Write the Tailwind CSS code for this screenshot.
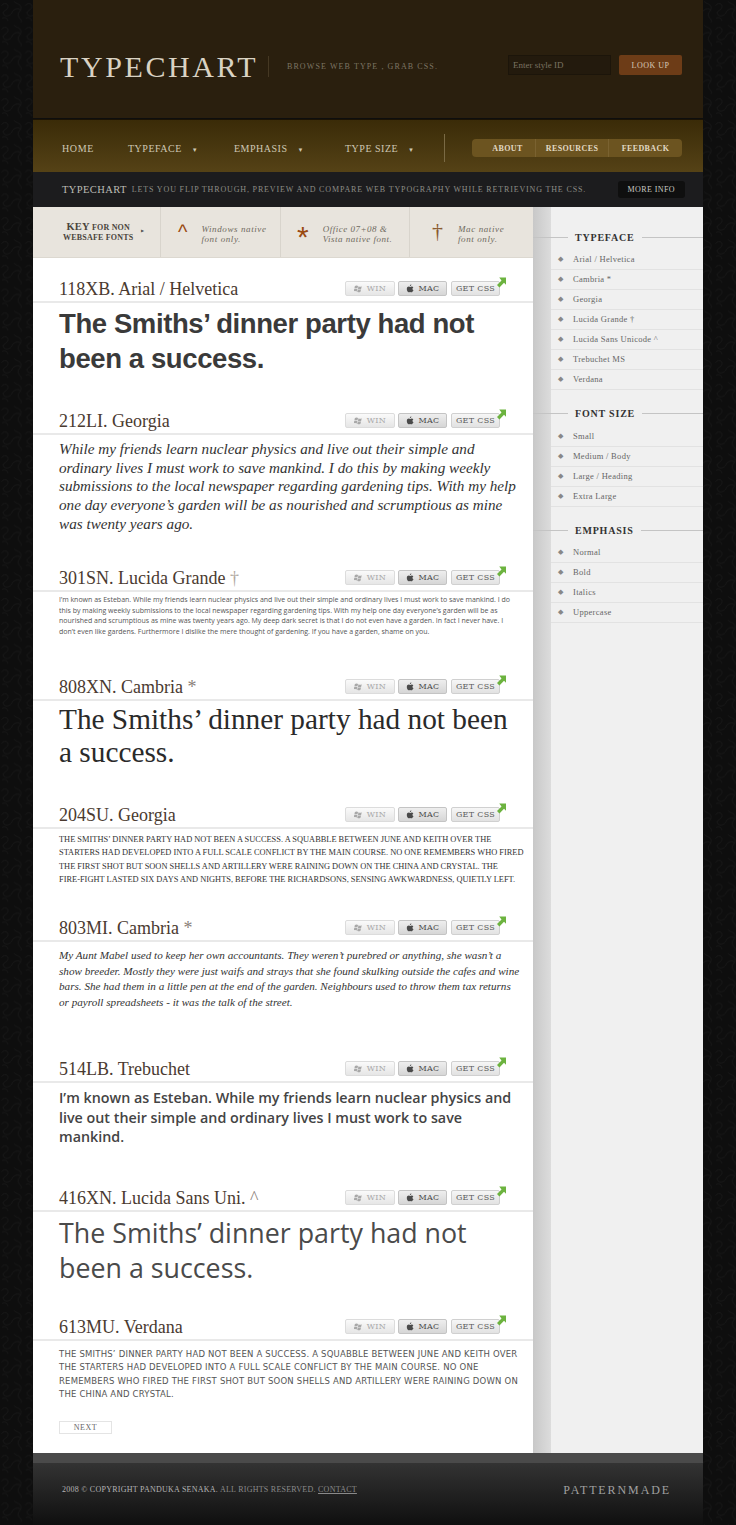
<!DOCTYPE html>
<html lang="en">
<head>
<meta charset="UTF-8">
<title>Typechart</title>
<script src="https://cdn.jsdelivr.net/npm/@tailwindcss/browser@4"></script>
</head>
<body class="relative bg-[#0e0e0e] font-['Liberation_Serif',serif]">
<svg class="hidden">
  <symbol id="win" viewBox="0 0 10 10"><path d="M1 2.200c1.200-.8 2.400-.8 3.500 0L3.800 5C2.700 4.300 1.600 4.300.4 5zM5 2.400c1.200.8 2.400.8 3.600 0L8 5.200c-1.200.8-2.400.8-3.600 0zM.3 5.600c1.200-.8 2.300-.8 3.400 0L3 8.400c-1.100-.8-2.200-.8-3.400 0zM4.300 5.800c1.200.8 2.400.8 3.600 0l-.7 2.800c-1.200.8-2.400.8-3.600 0z" fill="currentColor"/></symbol>
  <symbol id="apple" viewBox="0 0 10 10"><path d="M7.800 7.400c-.4.900-1 1.900-1.800 1.900-.6 0-.8-.4-1.500-.4s-.9.400-1.500.4C2 9.300.9 7.100.9 5.500c0-1.700 1.100-2.600 2.200-2.600.7 0 1.200.4 1.600.4s.9-.5 1.700-.5c.7 0 1.400.4 1.800 1-.6.400-1 .9-1 1.600 0 .9.500 1.500 1.300 1.800zM6 .6c0 .9-.8 1.800-1.700 1.700C4.200 1.400 5.100.6 6 .6z" fill="currentColor"/></symbol>
  <symbol id="arrow" viewBox="0 0 10 11"><path d="M2.500 0H10v8L7.800 5.800 2.700 11 0 8.300 5 3.200z" fill="#6cb33f"/></symbol>
</svg>

<!-- Leather texture behind the page -->
<svg class="absolute inset-0 w-full h-full -z-10">
  <defs>
    <pattern id="leather" width="34" height="34" patternUnits="userSpaceOnUse" patternTransform="scale(.7)">
      <path d="M2 8c5-6 11-2 9 3s-8 4-6 9 10 3 12-2 9-8 13-3M20 2c3 4 9 3 10 8s-5 7-4 12 6 6 4 10M3 26c4-2 8 0 8 4" fill="none" stroke="#191919" stroke-width="1"/>
    </pattern>
  </defs>
  <rect width="100%" height="100%" fill="url(#leather)"/>
</svg>

<div class="w-[670px] ml-[33px]">
  <!-- Top header -->
  <header class="h-[118px] bg-[#2a1f0e] flex items-start pt-[56px] pl-[27px]">
    <div class="text-[30px] leading-[21px] tracking-[2.6px] text-[#d9d2c3] w-[209px] border-r border-[#453823]">TYPECHART</div>
    <div class="ml-[18px] mt-[6px] text-[8px] leading-[10px] tracking-[1.1px] text-[#7d7564] w-[221px]">BROWSE WEB TYPE , GRAB CSS.</div>
    <div class="w-[103px] h-[20px] -mt-[1px] bg-[#231a0d] border border-[#1c150a] pl-[4px] text-[9px] leading-[19px] text-[#7b7362]">Enter style ID</div>
    <div class="w-[63px] h-[20px] -mt-[1px] ml-[8px] rounded-[2px] bg-[#6d3c17] text-center text-[8px] leading-[22px] tracking-[.5px] text-[#d8cbb8]">LOOK UP</div>
  </header>

  <!-- Nav -->
  <nav class="mt-[1px] h-[53px] pt-[4px] bg-[linear-gradient(#3a2b08,#554216)] border-t border-[#1a1204] flex items-center pl-[29px] text-[#cfc8b4]">
    <a class="text-[10px] tracking-[.6px] w-[66px]">HOME</a>
    <a class="text-[10px] tracking-[.5px] w-[106px]">TYPEFACE <span class="ml-[7px] text-[6px]">▼</span></a>
    <a class="text-[10px] tracking-[.5px] w-[111px]">EMPHASIS <span class="ml-[7px] text-[6px]">▼</span></a>
    <a class="text-[10px] tracking-[.5px] w-[99px]">TYPE SIZE <span class="ml-[7px] text-[6px]">▼</span></a>
    <div class="h-[28px] w-px bg-[#7a6a44]"></div>
    <div class="ml-[27px] w-[210px] h-[18px] rounded-[4px] bg-[#6c5420] flex text-[8px] leading-[19px] tracking-[.4px] text-[#e2dac5] font-bold">
      <span class="w-[64px] text-center pl-[8px] border-r border-[#7a6230]">ABOUT</span>
      <span class="w-[73px] text-center border-r border-[#7a6230]">RESOURCES</span>
      <span class="flex-1 text-center">FEEDBACK</span>
    </div>
  </nav>

  <!-- Intro strip -->
  <div class="h-[35px] pt-[1px] bg-[#1c1c1e] flex items-center pl-[29px]">
    <span class="text-[10.500px] tracking-[.4px] text-[#bdbdb5]">TYPECHART</span>
    <span class="ml-[5px] w-[486px] text-[8px] tracking-[.85px] text-[#8d8d86]">LETS YOU FLIP THROUGH, PREVIEW AND COMPARE WEB TYPOGRAPHY WHILE RETRIEVING THE CSS.</span>
    <span class="w-[67px] h-[17px] -mt-[1px] rounded-[3px] bg-[#0f0f0f] text-center text-[8px] leading-[17px] tracking-[.4px] text-[#c9c9c2]">MORE INFO</span>
  </div>

  <div class="flex">
    <main class="w-[500px] h-[1246px] bg-white">
      <!-- Key -->
      <div class="h-[51px] bg-[#e8e4dd] border-b border-[#dcd8d0] flex text-[#6f6a60]">
        <div class="w-[128px] pl-[30px] pt-[15px] flex border-r border-[#d8d4cc]">
          <div class="text-[8px] leading-[10px] font-bold tracking-[.2px] text-[#4a453c] text-center"><span class="text-[10.500px]">KEY</span> FOR NON<br>WEBSAFE FONTS</div>
          <span class="ml-[8px] mt-[6px] text-[4px] text-[#555]">▶</span>
        </div>
        <div class="w-[120px] flex border-r border-[#d8d4cc]">
          <span class="ml-[17px] mt-[15px] text-[20px] leading-[20px] text-[#9a4a12] font-['Liberation_Sans']">^</span>
          <div class="ml-[14px] mt-[17px] text-[9px] leading-[10px] italic tracking-[.6px]">Windows native<br>font only.</div>
        </div>
        <div class="w-[129px] flex border-r border-[#d8d4cc]">
          <span class="ml-[16px] mt-[15px] text-[30px] leading-[30px] text-[#9a4a12] font-['Liberation_Sans']">*</span>
          <div class="ml-[14px] mt-[17px] text-[9px] leading-[10px] italic tracking-[.5px]">Office 07+08 &amp;<br>Vista native font.</div>
        </div>
        <div class="flex-1 flex">
          <span class="ml-[22px] mt-[13px] text-[22px] leading-[22px] text-[#8a5a30]">†</span>
          <div class="ml-[15px] mt-[17px] text-[9px] leading-[10px] italic tracking-[.6px]">Mac native<br>font only.</div>
        </div>
      </div>

      <section class="mt-[15px]">
        <div class="h-[30px] border-b-2 border-[#e9e9e9] flex justify-between pl-[26px] pr-[33px]">
          <h2 class="text-[18px] leading-[33px] text-[#4a3a30]">118XB. Arial / Helvetica</h2>
          <div class="relative flex pt-[8px] text-[8px] tracking-[.3px] font-['DejaVu_Serif']">
            <span class="w-[50px] h-[15px] rounded-[2px] border border-[#dcdcdc] bg-[linear-gradient(#fafafa,#e6e6e6)] flex items-center justify-center gap-[4px] text-[#a8a8a8]"><svg class="w-[9px] h-[9px]"><use href="#win"/></svg>WIN</span>
            <span class="w-[49px] h-[15px] ml-[3px] rounded-[2px] border border-[#c4c4c4] bg-[linear-gradient(#eeeeee,#d6d6d6)] flex items-center justify-center gap-[4px] text-[#4a4a4a]"><svg class="w-[9px] h-[9px]"><use href="#apple"/></svg>MAC</span>
            <span class="w-[49px] h-[15px] ml-[4px] rounded-[2px] border border-[#d0d0d0] bg-[linear-gradient(#f6f6f6,#e2e2e2)] flex items-center justify-center text-[#5a5a5a]">GET CSS</span>
            <svg class="absolute right-[-6px] top-[4px] w-[9px] h-[11px]"><use href="#arrow"/></svg>
          </div>
        </div>
        <p class="h-[102px] pl-[26px] pt-[3px] text-[27.500px] leading-[35px] font-bold tracking-[-.4px] text-[#3a3a3a] font-['Liberation_Sans']">The Smiths’ dinner party had not<br>been a success.</p>
      </section>

      <section>
        <div class="h-[30px] border-b-2 border-[#e9e9e9] flex justify-between pl-[26px] pr-[33px]">
          <h2 class="text-[18px] leading-[33px] text-[#4a3a30]">212LI. Georgia</h2>
          <div class="relative flex pt-[8px] text-[8px] tracking-[.3px] font-['DejaVu_Serif']">
            <span class="w-[50px] h-[15px] rounded-[2px] border border-[#dcdcdc] bg-[linear-gradient(#fafafa,#e6e6e6)] flex items-center justify-center gap-[4px] text-[#a8a8a8]"><svg class="w-[9px] h-[9px]"><use href="#win"/></svg>WIN</span>
            <span class="w-[49px] h-[15px] ml-[3px] rounded-[2px] border border-[#c4c4c4] bg-[linear-gradient(#eeeeee,#d6d6d6)] flex items-center justify-center gap-[4px] text-[#4a4a4a]"><svg class="w-[9px] h-[9px]"><use href="#apple"/></svg>MAC</span>
            <span class="w-[49px] h-[15px] ml-[4px] rounded-[2px] border border-[#d0d0d0] bg-[linear-gradient(#f6f6f6,#e2e2e2)] flex items-center justify-center text-[#5a5a5a]">GET CSS</span>
            <svg class="absolute right-[-6px] top-[4px] w-[9px] h-[11px]"><use href="#arrow"/></svg>
          </div>
        </div>
        <p class="h-[127px] pl-[26px] pt-[5px] text-[15.200px] leading-[18.700px] italic text-[#333] whitespace-nowrap">While my friends learn nuclear physics and live out their simple and<br>ordinary lives I must work to save mankind. I do this by making weekly<br>submissions to the local newspaper regarding gardening tips. With my help<br>one day everyone’s garden will be as nourished and scrumptious as mine<br>was twenty years ago.</p>
      </section>

      <section>
        <div class="h-[30px] border-b-2 border-[#e9e9e9] flex justify-between pl-[26px] pr-[33px]">
          <h2 class="text-[18px] leading-[33px] text-[#4a3a30]">301SN. Lucida Grande <span class="text-[#b0a8a0]">†</span></h2>
          <div class="relative flex pt-[8px] text-[8px] tracking-[.3px] font-['DejaVu_Serif']">
            <span class="w-[50px] h-[15px] rounded-[2px] border border-[#dcdcdc] bg-[linear-gradient(#fafafa,#e6e6e6)] flex items-center justify-center gap-[4px] text-[#a8a8a8]"><svg class="w-[9px] h-[9px]"><use href="#win"/></svg>WIN</span>
            <span class="w-[49px] h-[15px] ml-[3px] rounded-[2px] border border-[#c4c4c4] bg-[linear-gradient(#eeeeee,#d6d6d6)] flex items-center justify-center gap-[4px] text-[#4a4a4a]"><svg class="w-[9px] h-[9px]"><use href="#apple"/></svg>MAC</span>
            <span class="w-[49px] h-[15px] ml-[4px] rounded-[2px] border border-[#d0d0d0] bg-[linear-gradient(#f6f6f6,#e2e2e2)] flex items-center justify-center text-[#5a5a5a]">GET CSS</span>
            <svg class="absolute right-[-6px] top-[4px] w-[9px] h-[11px]"><use href="#arrow"/></svg>
          </div>
        </div>
        <p class="h-[79px] pl-[26px] pt-[3px] text-[7px] leading-[10.700px] text-[#555] font-['Open_Sans'] whitespace-nowrap">I’m known as Esteban. While my friends learn nuclear physics and live out their simple and ordinary lives I must work to save mankind. I do<br>this by making weekly submissions to the local newspaper regarding gardening tips. With my help one day everyone’s garden will be as<br>nourished and scrumptious as mine was twenty years ago. My deep dark secret is that I do not even have a garden. In fact I never have. I<br>don’t even like gardens. Furthermore I dislike the mere thought of gardening. If you have a garden, shame on you.</p>
      </section>

      <section>
        <div class="h-[30px] border-b-2 border-[#e9e9e9] flex justify-between pl-[26px] pr-[33px]">
          <h2 class="text-[18px] leading-[33px] text-[#4a3a30]">808XN. Cambria <span class="text-[#8a8078]">*</span></h2>
          <div class="relative flex pt-[8px] text-[8px] tracking-[.3px] font-['DejaVu_Serif']">
            <span class="w-[50px] h-[15px] rounded-[2px] border border-[#dcdcdc] bg-[linear-gradient(#fafafa,#e6e6e6)] flex items-center justify-center gap-[4px] text-[#a8a8a8]"><svg class="w-[9px] h-[9px]"><use href="#win"/></svg>WIN</span>
            <span class="w-[49px] h-[15px] ml-[3px] rounded-[2px] border border-[#c4c4c4] bg-[linear-gradient(#eeeeee,#d6d6d6)] flex items-center justify-center gap-[4px] text-[#4a4a4a]"><svg class="w-[9px] h-[9px]"><use href="#apple"/></svg>MAC</span>
            <span class="w-[49px] h-[15px] ml-[4px] rounded-[2px] border border-[#d0d0d0] bg-[linear-gradient(#f6f6f6,#e2e2e2)] flex items-center justify-center text-[#5a5a5a]">GET CSS</span>
            <svg class="absolute right-[-6px] top-[4px] w-[9px] h-[11px]"><use href="#arrow"/></svg>
          </div>
        </div>
        <p class="h-[98px] pl-[26px] pt-[2px] text-[29.300px] leading-[32.500px] text-[#2a2a2a] whitespace-nowrap">The Smiths’ dinner party had not been<br>a success.</p>
      </section>

      <section>
        <div class="h-[30px] border-b-2 border-[#e9e9e9] flex justify-between pl-[26px] pr-[33px]">
          <h2 class="text-[18px] leading-[33px] text-[#4a3a30]">204SU. Georgia</h2>
          <div class="relative flex pt-[8px] text-[8px] tracking-[.3px] font-['DejaVu_Serif']">
            <span class="w-[50px] h-[15px] rounded-[2px] border border-[#dcdcdc] bg-[linear-gradient(#fafafa,#e6e6e6)] flex items-center justify-center gap-[4px] text-[#a8a8a8]"><svg class="w-[9px] h-[9px]"><use href="#win"/></svg>WIN</span>
            <span class="w-[49px] h-[15px] ml-[3px] rounded-[2px] border border-[#c4c4c4] bg-[linear-gradient(#eeeeee,#d6d6d6)] flex items-center justify-center gap-[4px] text-[#4a4a4a]"><svg class="w-[9px] h-[9px]"><use href="#apple"/></svg>MAC</span>
            <span class="w-[49px] h-[15px] ml-[4px] rounded-[2px] border border-[#d0d0d0] bg-[linear-gradient(#f6f6f6,#e2e2e2)] flex items-center justify-center text-[#5a5a5a]">GET CSS</span>
            <svg class="absolute right-[-6px] top-[4px] w-[9px] h-[11px]"><use href="#arrow"/></svg>
          </div>
        </div>
        <p class="h-[83px] pl-[26px] pt-[4px] text-[8.400px] leading-[13.300px] text-[#333] whitespace-nowrap">THE SMITHS’ DINNER PARTY HAD NOT BEEN A SUCCESS. A SQUABBLE BETWEEN JUNE AND KEITH OVER THE<br>STARTERS HAD DEVELOPED INTO A FULL SCALE CONFLICT BY THE MAIN COURSE. NO ONE REMEMBERS WHO FIRED<br>THE FIRST SHOT BUT SOON SHELLS AND ARTILLERY WERE RAINING DOWN ON THE CHINA AND CRYSTAL. THE<br>FIRE-FIGHT LASTED SIX DAYS AND NIGHTS, BEFORE THE RICHARDSONS, SENSING AWKWARDNESS, QUIETLY LEFT.</p>
      </section>

      <section>
        <div class="h-[30px] border-b-2 border-[#e9e9e9] flex justify-between pl-[26px] pr-[33px]">
          <h2 class="text-[18px] leading-[33px] text-[#4a3a30]">803MI. Cambria <span class="text-[#8a8078]">*</span></h2>
          <div class="relative flex pt-[8px] text-[8px] tracking-[.3px] font-['DejaVu_Serif']">
            <span class="w-[50px] h-[15px] rounded-[2px] border border-[#dcdcdc] bg-[linear-gradient(#fafafa,#e6e6e6)] flex items-center justify-center gap-[4px] text-[#a8a8a8]"><svg class="w-[9px] h-[9px]"><use href="#win"/></svg>WIN</span>
            <span class="w-[49px] h-[15px] ml-[3px] rounded-[2px] border border-[#c4c4c4] bg-[linear-gradient(#eeeeee,#d6d6d6)] flex items-center justify-center gap-[4px] text-[#4a4a4a]"><svg class="w-[9px] h-[9px]"><use href="#apple"/></svg>MAC</span>
            <span class="w-[49px] h-[15px] ml-[4px] rounded-[2px] border border-[#d0d0d0] bg-[linear-gradient(#f6f6f6,#e2e2e2)] flex items-center justify-center text-[#5a5a5a]">GET CSS</span>
            <svg class="absolute right-[-6px] top-[4px] w-[9px] h-[11px]"><use href="#arrow"/></svg>
          </div>
        </div>
        <p class="h-[111px] pl-[26px] pt-[6px] text-[11.150px] leading-[15.600px] italic text-[#333] whitespace-nowrap">My Aunt Mabel used to keep her own accountants. They weren’t purebred or anything, she wasn’t a<br>show breeder. Mostly they were just waifs and strays that she found skulking outside the cafes and wine<br>bars. She had them in a little pen at the end of the garden. Neighbours used to throw them tax returns<br>or payroll spreadsheets - it was the talk of the street.</p>
      </section>

      <section>
        <div class="h-[30px] border-b-2 border-[#e9e9e9] flex justify-between pl-[26px] pr-[33px]">
          <h2 class="text-[18px] leading-[33px] text-[#4a3a30]">514LB. Trebuchet</h2>
          <div class="relative flex pt-[8px] text-[8px] tracking-[.3px] font-['DejaVu_Serif']">
            <span class="w-[50px] h-[15px] rounded-[2px] border border-[#dcdcdc] bg-[linear-gradient(#fafafa,#e6e6e6)] flex items-center justify-center gap-[4px] text-[#a8a8a8]"><svg class="w-[9px] h-[9px]"><use href="#win"/></svg>WIN</span>
            <span class="w-[49px] h-[15px] ml-[3px] rounded-[2px] border border-[#c4c4c4] bg-[linear-gradient(#eeeeee,#d6d6d6)] flex items-center justify-center gap-[4px] text-[#4a4a4a]"><svg class="w-[9px] h-[9px]"><use href="#apple"/></svg>MAC</span>
            <span class="w-[49px] h-[15px] ml-[4px] rounded-[2px] border border-[#d0d0d0] bg-[linear-gradient(#f6f6f6,#e2e2e2)] flex items-center justify-center text-[#5a5a5a]">GET CSS</span>
            <svg class="absolute right-[-6px] top-[4px] w-[9px] h-[11px]"><use href="#arrow"/></svg>
          </div>
        </div>
        <p class="h-[99px] pl-[26px] pt-[5px] text-[14.300px] leading-[19.500px] font-semibold text-[#444] font-['Open_Sans'] whitespace-nowrap">I’m known as Esteban. While my friends learn nuclear physics and<br>live out their simple and ordinary lives I must work to save<br>mankind.</p>
      </section>

      <section>
        <div class="h-[30px] border-b-2 border-[#e9e9e9] flex justify-between pl-[26px] pr-[33px]">
          <h2 class="text-[18px] leading-[33px] text-[#4a3a30]">416XN. Lucida Sans Uni. <span class="text-[#8a8078]">^</span></h2>
          <div class="relative flex pt-[8px] text-[8px] tracking-[.3px] font-['DejaVu_Serif']">
            <span class="w-[50px] h-[15px] rounded-[2px] border border-[#dcdcdc] bg-[linear-gradient(#fafafa,#e6e6e6)] flex items-center justify-center gap-[4px] text-[#a8a8a8]"><svg class="w-[9px] h-[9px]"><use href="#win"/></svg>WIN</span>
            <span class="w-[49px] h-[15px] ml-[3px] rounded-[2px] border border-[#c4c4c4] bg-[linear-gradient(#eeeeee,#d6d6d6)] flex items-center justify-center gap-[4px] text-[#4a4a4a]"><svg class="w-[9px] h-[9px]"><use href="#apple"/></svg>MAC</span>
            <span class="w-[49px] h-[15px] ml-[4px] rounded-[2px] border border-[#d0d0d0] bg-[linear-gradient(#f6f6f6,#e2e2e2)] flex items-center justify-center text-[#5a5a5a]">GET CSS</span>
            <svg class="absolute right-[-6px] top-[4px] w-[9px] h-[11px]"><use href="#arrow"/></svg>
          </div>
        </div>
        <p class="h-[99px] pl-[26px] pt-[3px] text-[26.800px] leading-[35px] text-[#4a4a4a] font-['Open_Sans'] whitespace-nowrap">The Smiths’ dinner party had not<br>been a success.</p>
      </section>

      <section>
        <div class="h-[30px] border-b-2 border-[#e9e9e9] flex justify-between pl-[26px] pr-[33px]">
          <h2 class="text-[18px] leading-[33px] text-[#4a3a30]">613MU. Verdana</h2>
          <div class="relative flex pt-[8px] text-[8px] tracking-[.3px] font-['DejaVu_Serif']">
            <span class="w-[50px] h-[15px] rounded-[2px] border border-[#dcdcdc] bg-[linear-gradient(#fafafa,#e6e6e6)] flex items-center justify-center gap-[4px] text-[#a8a8a8]"><svg class="w-[9px] h-[9px]"><use href="#win"/></svg>WIN</span>
            <span class="w-[49px] h-[15px] ml-[3px] rounded-[2px] border border-[#c4c4c4] bg-[linear-gradient(#eeeeee,#d6d6d6)] flex items-center justify-center gap-[4px] text-[#4a4a4a]"><svg class="w-[9px] h-[9px]"><use href="#apple"/></svg>MAC</span>
            <span class="w-[49px] h-[15px] ml-[4px] rounded-[2px] border border-[#d0d0d0] bg-[linear-gradient(#f6f6f6,#e2e2e2)] flex items-center justify-center text-[#5a5a5a]">GET CSS</span>
            <svg class="absolute right-[-6px] top-[4px] w-[9px] h-[11px]"><use href="#arrow"/></svg>
          </div>
        </div>
        <p class="pl-[26px] pt-[7px] text-[8.500px] leading-[13.300px] tracking-[.2px] text-[#555] font-['DejaVu_Sans'] whitespace-nowrap">THE SMITHS’ DINNER PARTY HAD NOT BEEN A SUCCESS. A SQUABBLE BETWEEN JUNE AND KEITH OVER<br>THE STARTERS HAD DEVELOPED INTO A FULL SCALE CONFLICT BY THE MAIN COURSE. NO ONE<br>REMEMBERS WHO FIRED THE FIRST SHOT BUT SOON SHELLS AND ARTILLERY WERE RAINING DOWN ON<br>THE CHINA AND CRYSTAL.</p>
        <a class="block ml-[26px] mt-[20px] w-[53px] h-[13px] border border-[#e4e4e4] text-center text-[8px] leading-[11px] tracking-[.5px] text-[#666]">NEXT</a>
      </section>
    </main>

    <!-- Sidebar -->
    <aside class="w-[170px] h-[1246px] bg-[linear-gradient(90deg,#c8c8c8,#dcdcdc_18px,#f0f0f0_18px)] pt-[24px] text-[8.500px] text-[#666]">
      <div class="flex items-center h-[12px]"><span class="w-[35px] h-px bg-[#c4c4c4]"></span><h3 class="mx-[7px] text-[10px] font-bold tracking-[.8px] text-[#333]">TYPEFACE</h3><span class="flex-1 h-px bg-[#c4c4c4]"></span></div>
      <ul class="ml-[18px] mt-[7px]">
        <li class="h-[20px] border-b border-[#e2e2e2] flex items-center tracking-[.3px]"><span class="w-[22px] pl-[7px] text-[7px] text-[#888]">◆</span>Arial / Helvetica</li>
        <li class="h-[20px] border-b border-[#e2e2e2] flex items-center tracking-[.3px]"><span class="w-[22px] pl-[7px] text-[7px] text-[#888]">◆</span>Cambria *</li>
        <li class="h-[20px] border-b border-[#e2e2e2] flex items-center tracking-[.3px]"><span class="w-[22px] pl-[7px] text-[7px] text-[#888]">◆</span>Georgia</li>
        <li class="h-[20px] border-b border-[#e2e2e2] flex items-center tracking-[.3px]"><span class="w-[22px] pl-[7px] text-[7px] text-[#888]">◆</span>Lucida Grande †</li>
        <li class="h-[20px] border-b border-[#e2e2e2] flex items-center tracking-[.3px]"><span class="w-[22px] pl-[7px] text-[7px] text-[#888]">◆</span>Lucida Sans Unicode ^</li>
        <li class="h-[20px] border-b border-[#e2e2e2] flex items-center tracking-[.3px]"><span class="w-[22px] pl-[7px] text-[7px] text-[#888]">◆</span>Trebuchet MS</li>
        <li class="h-[20px] border-b border-[#e2e2e2] flex items-center tracking-[.3px]"><span class="w-[22px] pl-[7px] text-[7px] text-[#888]">◆</span>Verdana</li>
      </ul>
      <div class="flex items-center h-[12px] mt-[17px]"><span class="w-[35px] h-px bg-[#c4c4c4]"></span><h3 class="mx-[7px] text-[10px] font-bold tracking-[.8px] text-[#333]">FONT SIZE</h3><span class="flex-1 h-px bg-[#c4c4c4]"></span></div>
      <ul class="ml-[18px] mt-[8px]">
        <li class="h-[20px] border-b border-[#e2e2e2] flex items-center tracking-[.3px]"><span class="w-[22px] pl-[7px] text-[7px] text-[#888]">◆</span>Small</li>
        <li class="h-[20px] border-b border-[#e2e2e2] flex items-center tracking-[.3px]"><span class="w-[22px] pl-[7px] text-[7px] text-[#888]">◆</span>Medium / Body</li>
        <li class="h-[20px] border-b border-[#e2e2e2] flex items-center tracking-[.3px]"><span class="w-[22px] pl-[7px] text-[7px] text-[#888]">◆</span>Large / Heading</li>
        <li class="h-[20px] border-b border-[#e2e2e2] flex items-center tracking-[.3px]"><span class="w-[22px] pl-[7px] text-[7px] text-[#888]">◆</span>Extra Large</li>
      </ul>
      <div class="flex items-center h-[12px] mt-[17px]"><span class="w-[35px] h-px bg-[#c4c4c4]"></span><h3 class="mx-[7px] text-[10px] font-bold tracking-[.8px] text-[#333]">EMPHASIS</h3><span class="flex-1 h-px bg-[#c4c4c4]"></span></div>
      <ul class="ml-[18px] mt-[7px]">
        <li class="h-[20px] border-b border-[#e2e2e2] flex items-center tracking-[.3px]"><span class="w-[22px] pl-[7px] text-[7px] text-[#888]">◆</span>Normal</li>
        <li class="h-[20px] border-b border-[#e2e2e2] flex items-center tracking-[.3px]"><span class="w-[22px] pl-[7px] text-[7px] text-[#888]">◆</span>Bold</li>
        <li class="h-[20px] border-b border-[#e2e2e2] flex items-center tracking-[.3px]"><span class="w-[22px] pl-[7px] text-[7px] text-[#888]">◆</span>Italics</li>
        <li class="h-[20px] border-b border-[#e2e2e2] flex items-center tracking-[.3px]"><span class="w-[22px] pl-[7px] text-[7px] text-[#888]">◆</span>Uppercase</li>
      </ul>
    </aside>
  </div>

  <!-- Footer -->
  <footer class="h-[72px] bg-[linear-gradient(#4a4a4a_0,#4a4a4a_10px,#333_10px,#0f0f0f_100%)] flex items-start pt-[31px] pl-[29px] pr-[32px] justify-between">
    <p class="text-[8px] leading-[12px] tracking-[.25px] text-[#8a8a8a]"><span class="text-[#b4b4b4]">2008 © COPYRIGHT PANDUKA SENAKA.</span> ALL RIGHTS RESERVED. <u>CONTACT</u></p>
    <span class="text-[12px] leading-[12px] tracking-[1.900px] text-[#a0a0a0]">PATTERNMADE</span>
  </footer>
</div>
</body>
</html>
